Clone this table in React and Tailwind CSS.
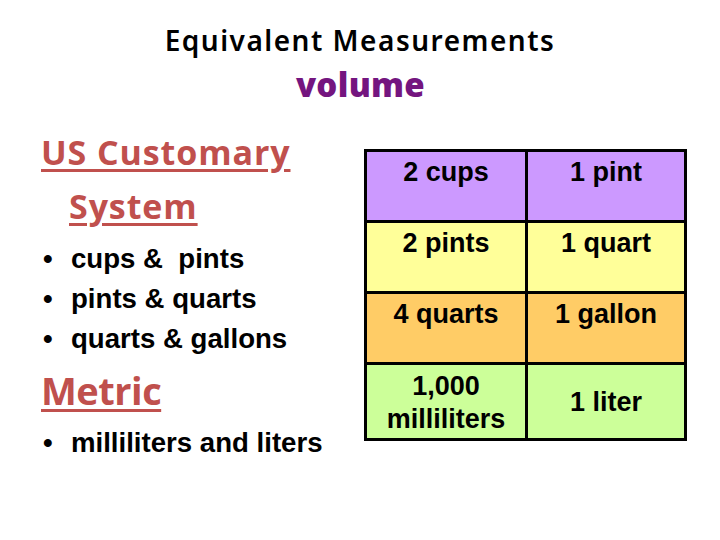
import React from "react";

const arial = { fontFamily: '"Liberation Sans", Arial, sans-serif' };
const open = { fontFamily: '"Open Sans", "Noto Sans", sans-serif' };

function Bullet({ children }) {
  return (
    <div className="flex leading-[40px] text-[27.6px] font-bold text-black" style={arial}>
      <span className="w-[28px] shrink-0">•</span>
      <span>{children}</span>
    </div>
  );
}

function Cell({ bg, children, center }) {
  return (
    <div
      className={`${bg} flex flex-col ${center ? "justify-center pt-[2px]" : "justify-start pt-[5px]"} items-center text-center text-[27px] font-bold text-black`}
      style={arial}
    >
      {children}
    </div>
  );
}

export default function App() {
  return (
    <div className="w-[720px] h-[540px] bg-white flex flex-col overflow-hidden">
      <div
        className="mt-[20px] text-center text-[28px] leading-[40px] font-semibold tracking-[1.5px] text-black"
        style={{ fontFamily: '"Noto Sans", "Open Sans", sans-serif' }}
      >
        Equivalent Measurements
      </div>
      <div
        className="mt-[6px] text-center text-[33px] leading-[38px] font-extrabold tracking-[0.3px] text-[#74157f] pl-[1px]"
        style={open}
      >
        volume
      </div>
      <div className="mt-[21px] flex items-start">
        <div className="w-[364px] shrink-0 pl-[43px] flex flex-col">
          <div
            className="text-[34px] leading-[54px] font-bold text-[#c0504d] tracking-[0.9px]"
            style={open}
          >
            <div className="-ml-[2px]">
              <span className="underline decoration-[3px] underline-offset-[4px]">US Customary</span>
            </div>
            <div className="pl-[26px]">
              <span className="underline decoration-[3px] underline-offset-[4px]">System</span>
            </div>
          </div>
          <div className="mt-[6px] flex flex-col">
            <Bullet>cups &amp; &nbsp;pints</Bullet>
            <Bullet>pints &amp; quarts</Bullet>
            <Bullet>quarts &amp; gallons</Bullet>
          </div>
          <div
            className="mt-[6px] -ml-[2px] text-[38px] leading-[50px] font-bold text-[#c0504d] tracking-[-0.5px]"
            style={open}
          >
            <span className="underline decoration-[3px] underline-offset-[4px]">Metric</span>
          </div>
          <div className="mt-[8px]">
            <Bullet>milliliters and liters</Bullet>
          </div>
        </div>
        <div className="mt-[24px] grid grid-cols-[158px_156px] grid-rows-[68px_68px_68px_73px] gap-[3px] p-[3px] bg-black">
          <Cell bg="bg-[#cc99ff]"><div className="leading-[31px]">2 cups</div></Cell>
          <Cell bg="bg-[#cc99ff]"><div className="leading-[31px]">1 pint</div></Cell>
          <Cell bg="bg-[#ffff99]"><div className="leading-[31px]">2 pints</div></Cell>
          <Cell bg="bg-[#ffff99]"><div className="leading-[31px]">1 quart</div></Cell>
          <Cell bg="bg-[#ffcc66]"><div className="leading-[31px]">4 quarts</div></Cell>
          <Cell bg="bg-[#ffcc66]"><div className="leading-[31px]">1 gallon</div></Cell>
          <Cell bg="bg-[#ccff99]"><div className="pt-[0px] leading-[33px]">1,000<br />milliliters</div></Cell>
          <Cell bg="bg-[#ccff99]" center><div className="leading-[31px]">1 liter</div></Cell>
        </div>
      </div>
    </div>
  );
}
